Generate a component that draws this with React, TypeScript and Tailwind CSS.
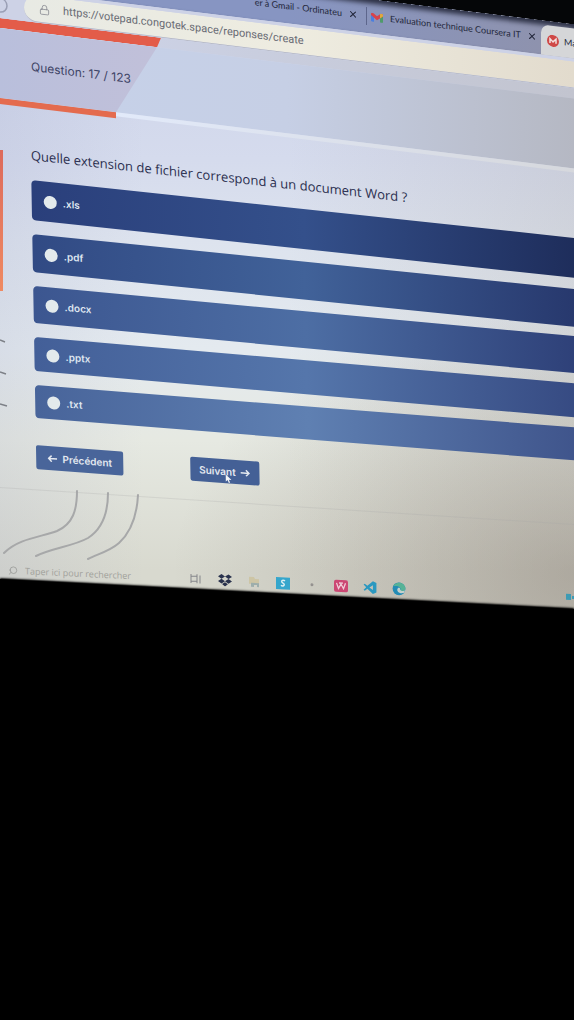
import { Search, X, Lock } from "lucide-react";

type Option = { label: string; row: string };

const options: Option[] = [
  {
    label: ".xls",
    row: "h-[40px] skew-y-[6.1deg] bg-linear-to-r from-[#2a3f7b] via-[#34508b] to-[#1e2d5b]",
  },
  {
    label: ".pdf",
    row: "h-[38px] skew-y-[5.8deg] bg-linear-to-r from-[#314a84] via-[#416299] to-[#27386d]",
  },
  {
    label: ".docx",
    row: "h-[37px] skew-y-[5.3deg] bg-linear-to-r from-[#3c5690] via-[#4d6ea4] to-[#2e4078]",
  },
  {
    label: ".pptx",
    row: "h-[34px] skew-y-[4.9deg] bg-linear-to-r from-[#435f98] via-[#5576ab] to-[#364a82]",
  },
  {
    label: ".txt",
    row: "h-[33px] skew-y-[4.5deg] bg-linear-to-r from-[#48649a] via-[#5f80b2] to-[#3f548b]",
  },
];

function GmailIcon() {
  return (
    <svg viewBox="0 0 24 18" className="h-[9px] w-[12px] shrink-0" aria-hidden="true">
      <path d="M0 2v14a2 2 0 0 0 2 2h4V7z" fill="#4a7fe0" />
      <path d="M24 2v14a2 2 0 0 1-2 2h-4V7z" fill="#4f9a6b" />
      <path d="M0 2.500C0 0 3-1 5 .6L12 6l7-5.400C21-1 24 0 24 2.500V5l-12 9L0 5z" fill="#d8434a" />
      <path d="M18 1.400 19 .6C21-1 24 0 24 2.500V5l-6 4.500z" fill="#e0a93c" />
    </svg>
  );
}

function Browser() {
  return (
    <header className="-mt-[86px] origin-top-left skew-y-[7deg] font-['Lato',sans-serif]">
      <div className="h-[40px] bg-[#050608]" />
      <nav
        aria-label="Onglets"
        className="flex h-[34px] items-stretch bg-linear-to-r from-[#8795c2] from-50% to-[#8f92ab] text-[9px] text-[#23273b] shadow-[inset_0_4px_5px_#2c3044]"
      >
        <div className="flex w-[366px] shrink-0 items-center justify-end gap-[6px] pr-[8px]">
          <a href="#gmail" className="whitespace-nowrap">
            er à Gmail - Ordinateu
          </a>
          <button type="button" aria-label="Fermer l’onglet Gmail">
            <X className="size-[10px]" strokeWidth={2.5} />
          </button>
        </div>
        <div className="my-[8px] w-px shrink-0 bg-[#5d668c]" />
        <div className="flex w-[174px] shrink-0 items-center gap-[7px] pl-[4px]">
          <GmailIcon />
          <a href="#evaluation" className="w-[130px] whitespace-nowrap">
            Evaluation technique Coursera IT
          </a>
          <button type="button" aria-label="Fermer l’onglet Evaluation">
            <X className="size-[10px]" strokeWidth={2.5} />
          </button>
        </div>
        <div className="mt-[4px] flex flex-1 items-center gap-[5px] rounded-tl-lg bg-[#d5d6d8] pl-[6px]">
          <svg viewBox="0 0 24 24" className="size-[12px] shrink-0" aria-hidden="true">
            <circle cx="12" cy="12" r="12" fill="#cf4846" />
            <path d="M6 17V8l6 6 6-6v9" fill="none" stroke="#f2dedd" strokeWidth="3" />
          </svg>
          <a href="#ma" className="whitespace-nowrap">
            Ma
          </a>
        </div>
      </nav>
      <div className="flex h-[30px] bg-[#cdd2e6] pt-[3px]">
        <div className="flex w-[24px] items-center">
          <svg viewBox="0 0 8 16" className="h-[16px] w-[8px]" aria-hidden="true">
            <path d="M0 15a7 7 0 0 0 0-14" fill="none" stroke="#9a9fb5" strokeWidth="1.500" />
          </svg>
        </div>
        <div className="flex flex-1 items-center gap-[13px] rounded-l-2xl border-b border-[#b9bcc8] bg-linear-to-r from-[#e8eae4] via-[#eeece0] to-[#e2dbcd] pl-[15px]">
          <Lock className="size-[11px] text-[#7b7d86]" strokeWidth={1.5} />
          <input
            aria-label="Adresse"
            readOnly
            value="https://votepad.congotek.space/reponses/create"
            className="min-w-0 flex-1 bg-transparent font-['Roboto',sans-serif] text-[11px] text-[#686a73] outline-none"
          />
        </div>
      </div>
      <div className="flex h-[10px] bg-linear-to-r from-[#cfd6ec] to-[#c2c4cf]">
        <div className="w-[161px] bg-[#e35c49] [clip-path:polygon(0_0,100%_0,157px_100%,0_100%)]" />
      </div>
      <div className="bg-linear-to-r from-[#c6d2ea] via-[#c6cfe5] to-[#b5b8c3]">
        <div className="flex h-[70px] w-[157px] items-center bg-linear-to-r from-[#b9bfdc] to-[#c1c0d9] pl-[31px] [clip-path:polygon(0_0,100%_0,116px_100%,0_100%)]">
          <p className="font-['Inter',sans-serif] text-[12px] whitespace-nowrap text-[#3f4567]">
            Question: 17 / 123
          </p>
        </div>
      </div>
      <div className="flex h-[6px] items-start">
        <div className="h-[6px] w-[116px] bg-[#e46b4e]" />
        <div className="h-[4px] flex-1 bg-linear-to-r from-[#e2eafa] to-[#d6d8dd]" />
      </div>
    </header>
  );
}

function Quiz() {
  return (
    <main className="flex">
      <div className="w-[3px] shrink-0">
        <div className="mt-[46px] h-[141px] bg-linear-to-b from-[#dd6a5b] to-[#ef8a62]" />
        <svg viewBox="0 0 8 70" className="mt-[48px] h-[70px] w-[8px]" aria-hidden="true">
          <path d="M0 1l5 2M0 33l6 2M0 65l7 2" stroke="#7d8087" strokeWidth="1.500" />
        </svg>
      </div>
      <form
        onSubmit={(e) => e.preventDefault()}
        className="flex-1 origin-top-left skew-x-[1deg] pt-[41px] pb-[18px] pl-[27px] font-['Inter',sans-serif]"
      >
        <fieldset>
          <legend className="h-[35px] origin-left skew-y-[6.4deg] font-['Open_Sans',sans-serif] text-[13px] leading-[20px] font-medium whitespace-nowrap text-[#2c3050]">
            Quelle extension de fichier correspond à un document Word ?
          </legend>
          <div className="flex flex-col gap-[14px]">
            {options.map((o) => (
              <label
                key={o.label}
                className={`flex origin-left items-center gap-[6px] rounded-l-[4px] pl-[12px] text-[10px] font-semibold text-[#dfe6f0] ${o.row}`}
              >
                <input
                  type="radio"
                  name="reponse"
                  value={o.label}
                  className="size-[13px] appearance-none rounded-full bg-[#e3eaec]"
                />
                {o.label}
              </label>
            ))}
          </div>
        </fieldset>
        <div className="mt-[27px] flex origin-left skew-y-[4.3deg] gap-[67px] text-[10px] font-semibold text-[#e4e9f0]">
          <button
            type="button"
            className="flex h-[24px] w-[87px] items-center justify-center gap-[5px] rounded-[2px] bg-[#49659a] whitespace-nowrap"
          >
            <Arrow back />
            Précédent
          </button>
          <button
            type="submit"
            className="relative flex h-[24px] w-[69px] items-center justify-center gap-[5px] rounded-[2px] bg-[#446096] whitespace-nowrap"
          >
            Suivant
            <Arrow />
            <svg viewBox="0 0 12 18" className="absolute top-[15px] left-[35px] h-[9px] w-[6px]" aria-hidden="true">
              <path d="M0 0v15l4-3.500L6.500 17l2.500-1-2.500-5.500H12z" fill="#f4f6f8" />
            </svg>
          </button>
        </div>
      </form>
    </main>
  );
}

function Arrow({ back = false }: { back?: boolean }) {
  return (
    <svg
      viewBox="0 0 20 14"
      className={back ? "h-[7px] w-[10px] rotate-180" : "h-[7px] w-[10px]"}
      aria-hidden="true"
    >
      <path d="M0 7h17M11 1l6 6-6 6" fill="none" stroke="currentColor" strokeWidth="3" />
    </svg>
  );
}

function Taskbar() {
  return (
    <footer className="flex h-[19px] origin-left skew-y-[2.7deg] items-center pl-[8px]">
      <label className="flex w-[181px] items-center gap-[7px]">
        <Search className="size-[10px] -scale-x-100 text-[#8d8e8a]" strokeWidth={1.5} />
        <input
          aria-label="Rechercher"
          placeholder="Taper ici pour rechercher"
          className="w-[140px] bg-transparent font-['Open_Sans',sans-serif] text-[9px] outline-none placeholder:text-[#a2a29c]"
        />
      </label>
      <div className="flex items-center gap-[15px]">
        <svg viewBox="0 0 14 14" className="size-[14px]" fill="none" stroke="#85868a" aria-hidden="true">
          <path d="M2 4h6v5H2zM2 2v2M8 2v2M2 9v2M8 9v2M11 3v8" />
        </svg>
        <svg viewBox="0 0 24 22" className="h-[13px] w-[14px]" fill="#29324d" aria-hidden="true">
          <path d="M6 1l6 4-6 4-6-4zM18 1l6 4-6 4-6-4zM6 9l6 4-6 4-6-4zM18 9l6 4-6 4-6-4zM12 14.500l5 3.500-5 4-5-4z" />
        </svg>
        <svg viewBox="0 0 14 14" className="size-[14px]" aria-hidden="true">
          <path d="M2 2h5l1 2h4v5H2z" fill="#cdc5a5" />
          <path d="M4 8h8v4h-2v-2H7v2H4z" fill="#9daeac" />
        </svg>
        <svg viewBox="0 0 14 14" className="size-[14px]" aria-hidden="true">
          <path d="M0 1h14v12H0z" fill="#35a6cc" />
          <path d="M9 4.500c-2-1.500-4 0-3 1.500l2 1.500c1 1.500-1.500 3-3 1.500" fill="none" stroke="#d9eef2" strokeWidth="1.500" />
        </svg>
        <svg viewBox="0 0 14 14" className="size-[14px]" aria-hidden="true">
          <circle cx="7" cy="7" r="1.500" fill="#94918f" />
        </svg>
        <svg viewBox="0 0 14 14" className="size-[14px]" aria-hidden="true">
          <rect y="1" width="14" height="12" rx="2" fill="#cc4874" />
          <path d="M2.500 4l2 5.500L7 5l2.500 4.500 2-5.500M5 4h4" fill="none" stroke="#f0cdd8" strokeWidth="1.300" />
        </svg>
        <svg viewBox="0 0 24 24" className="size-[14px]" fill="#2a98c0" aria-hidden="true">
          <path d="M17 1l6 3v16l-6 3L7.500 14.500 3 18l-2-1.500L5.500 12 1 7.500 3 6l4.500 3.500zM17 8l-6 4 6 4z" />
        </svg>
        <svg viewBox="0 0 24 24" className="size-[14px]" aria-hidden="true">
          <circle cx="12" cy="12" r="11" fill="#238bb5" />
          <path d="M2 8C6-1 22-1 23 11c0 4-5 6-9 4 3-6-4-9-12-7z" fill="#56b296" />
          <path d="M10 11c-3 4 1 10 10 8l3-5c-4 3-9 1-9-1 0-3-3-3-4-2z" fill="#c4d0cd" />
        </svg>
      </div>
      <div className="flex flex-1 justify-end">
        <svg viewBox="0 0 8 8" className="size-[8px]" aria-hidden="true">
          <path d="M0 1h5v6H0zM6 3h2v3H6z" fill="#3e9bb4" />
        </svg>
      </div>
    </footer>
  );
}

export default function App() {
  return (
    <div className="flex min-h-screen flex-col overflow-hidden bg-black">
      <div className="flow-root bg-[radial-gradient(ellipse_70%_40%_at_100%_85%,rgba(120,108,98,0.36),transparent),linear-gradient(90deg,rgba(150,155,190,0.16),transparent_25%,transparent_50%,rgba(150,142,135,0.18)_100%),linear-gradient(180deg,#ccd3ea_0,#d5dbed_160px,#dde3ee_240px,#e4eaef_350px,#e6e9e2_440px,#d8d9cf_570px)] pb-[96px]">
        <Browser />
        <Quiz />
        <div className="h-px origin-left skew-y-[3.7deg] bg-[#a9a7a8]/25" />
        <svg viewBox="0 0 144 72" className="h-[72px] w-[144px]" aria-hidden="true">
          <g fill="none" stroke="#a7a8a9" strokeWidth="2" strokeLinecap="round">
            <path d="M77 3C77 22 73 36 57 43C42 49 19 50 4 65" />
            <path d="M108 5C108 25 102 41 88 50C74 58 52 60 36 68" />
            <path d="M138 7C137 26 131 44 119 55C110 63 98 66 88 71" />
          </g>
        </svg>
        <Taskbar />
      </div>
      <div className="-mt-[96px] min-h-[442px] flex-1 origin-top-left skew-y-[3deg] bg-black shadow-[0_-1px_2px_#000]" />
    </div>
  );
}
